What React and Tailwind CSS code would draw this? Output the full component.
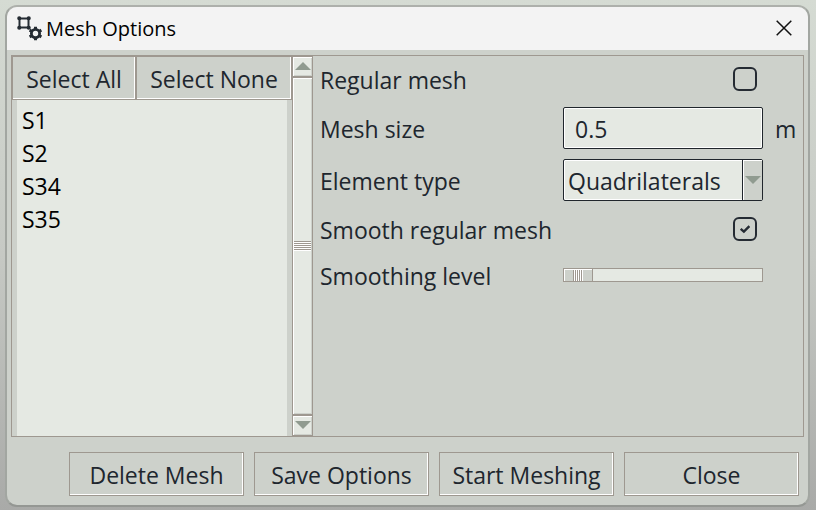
import React, { useState } from 'react';

const shapes = ['S1', 'S2', 'S34', 'S35'];

const MeshIcon = () => (
  <svg viewBox="0 0 26 26" className="w-[26px] h-[26px] text-[#252c33]" fill="none" stroke="currentColor">
    <path d="M3.5 2.5h9v9h-9z" strokeWidth="2" />
    <path d="M3.2 2.2h.1M12.7 2.2h.1M3.2 11.7h.1M12.7 11.7h.1" strokeWidth="4" strokeLinecap="round" />
    <circle cx="19.5" cy="17.5" r="4.1" strokeWidth="2.8" />
    <path
      d="M19.5 13v-2.2M19.5 22v2.2M15.5 15.2l-1.9-1.1M23.5 19.8l1.9 1.1M15.5 19.8l-1.9 1.1M23.5 15.2l1.9-1.1"
      strokeWidth="3"
    />
  </svg>
);

const Triangle = ({ down }) => (
  <svg viewBox="0 0 16 8" className="w-4 h-2" fill="#909b90">
    {down ? <path d="M0 0h16L8 8z" /> : <path d="M0 8h16L8 0z" />}
  </svg>
);

const Button = ({ children, className = '', ...props }) => (
  <button
    type="button"
    className={`pt-[2px] border border-[#9e9890] bg-[#cdd1cb] shadow-[inset_-1px_-1px_#ffffff] hover:bg-[#d7dbd5] whitespace-nowrap ${className}`}
    {...props}
  >
    {children}
  </button>
);

const ScrollButton = ({ down, label }) => (
  <button
    type="button"
    aria-label={label}
    className="flex items-center justify-center h-[21px] pb-px shrink-0 border-y border-[#9e9890] bg-[#e5e9e3] shadow-[inset_1px_1px_#ffffff,inset_-1px_-1px_#cdd1cb]"
  >
    <Triangle down={down} />
  </button>
);

const CheckBox = ({ id, checked, onChange }) => (
  <span className="relative flex w-6 h-6">
    <input
      id={id}
      type="checkbox"
      checked={checked}
      onChange={(e) => onChange(e.target.checked)}
      className="peer appearance-none w-6 h-6 rounded-md border-2 border-[#252b33]"
    />
    <svg
      viewBox="0 0 24 24"
      className="absolute inset-0 w-6 h-6 invisible peer-checked:visible pointer-events-none"
      fill="none"
      stroke="#252b33"
      strokeWidth="2.4"
    >
      <path d="M7.7 11.8l3.2 2.8 5.5-5.4" />
    </svg>
  </span>
);

const App = () => {
  const [regular, setRegular] = useState(false);
  const [smooth, setSmooth] = useState(true);
  const [size, setSize] = useState('0.5');
  const [elementType, setElementType] = useState('Quadrilaterals');
  const [level, setLevel] = useState(0);

  return (
    <div className="min-h-screen flex pl-[5px] pr-[6px] pt-[5px] pb-[3px] bg-linear-to-b from-[#d5dbd3] via-[#c6c9c4] to-[#a9aaa8] font-['Open_Sans','Noto_Sans',sans-serif] text-[23px] leading-8 text-[#20262e]">
      <div className="flex-1 flex flex-col rounded-xl border-2 border-t-[#adb0ab] border-x-[#a2a6a1] border-b-[#949793] bg-[#cdd1cb] overflow-hidden">
        <header className="flex items-center h-[43px] shrink-0 pl-[9px] pr-3 bg-[#f3f3f3]">
          <MeshIcon />
          <h1 className="flex-1 pl-1 text-[20px] text-black">Mesh Options</h1>
          <button type="button" aria-label="Close window" className="p-1 pb-[6px]">
            <svg viewBox="0 0 16 16" className="w-4 h-4" stroke="#111111" strokeWidth="1.5">
              <path d="M.7.7l14.6 14.6M15.3.7L.7 15.3" />
            </svg>
          </button>
        </header>

        <main className="flex-1 flex mx-1 mt-[5px] border border-[#9e9890]">
          <section className="flex w-[301px] shrink-0">
            <div className="flex-1 flex flex-col">
              <div className="flex h-11 shrink-0">
                <Button className="w-[124px]">Select All</Button>
                <Button className="flex-1">Select None</Button>
              </div>
              <ul className="flex-1 ml-[5px] mr-[5px] pl-[5px] pt-1 bg-[#e5e9e3] text-black leading-[33px]">
                {shapes.map((name) => (
                  <li key={name}>{name}</li>
                ))}
              </ul>
            </div>
            <div className="flex flex-col w-[21px] border-x border-[#9e9890]">
              <ScrollButton label="Scroll up" />
              <div className="flex-1 flex flex-col items-stretch justify-center border-y border-[#9e9890] bg-[#e5e9e3] shadow-[inset_1px_1px_#ffffff,inset_-1px_-1px_#cdd1cb]">
                <div className="h-[10px] mx-px bg-[repeating-linear-gradient(to_bottom,#9e9890_0px_1px,#ffffff_1px_2px)]" />
              </div>
              <ScrollButton down label="Scroll down" />
            </div>
          </section>

          <form className="flex-1 grid grid-cols-[1fr_200px_40px] auto-rows-max items-start pl-[7px]">
            <label htmlFor="regular" className="h-[50px] pt-2">Regular mesh</label>
            <div className="flex justify-end pt-[11px] pr-[6px]">
              <CheckBox id="regular" checked={regular} onChange={setRegular} />
            </div>
            <span />

            <label htmlFor="size" className="h-[52px] pt-[7px]">Mesh size</label>
            <input
              id="size"
              type="text"
              value={size}
              onChange={(e) => setSize(e.target.value)}
              className="mt-px w-full h-[42px] pt-[2px] pl-[11px] rounded-xs border border-[#20262c] bg-[#e5e9e3] shadow-[inset_0_0_0_1px_#ffffff] outline-none"
            />
            <span className="h-[52px] pt-[7px] pl-3">m</span>

            <label htmlFor="type" className="h-[50px] pt-[7px]">Element type</label>
            <div className="relative mt-px">
              <select
                id="type"
                value={elementType}
                onChange={(e) => setElementType(e.target.value)}
                className="block appearance-none w-full h-[42px] pt-[2px] pl-1 rounded-xs border border-[#20262c] bg-[#e5e9e3] shadow-[inset_0_0_0_1px_#ffffff] outline-none"
              >
                <option>Quadrilaterals</option>
                <option>Triangles</option>
              </select>
              <span className="absolute right-px inset-y-px w-5 flex items-center justify-center border-l border-[#20262c] bg-[#cdd1cb] shadow-[inset_1px_1px_#ffffff] pointer-events-none">
                <Triangle down />
              </span>
            </div>
            <span />

            <label htmlFor="smooth" className="h-12 pt-[6px]">Smooth regular mesh</label>
            <div className="flex justify-end pt-[9px] pr-[6px]">
              <CheckBox id="smooth" checked={smooth} onChange={setSmooth} />
            </div>
            <span />

            <label htmlFor="level" className="h-12 pt-1">Smoothing level</label>
            <input
              id="level"
              type="range"
              min="0"
              max="10"
              value={level}
              onChange={(e) => setLevel(Number(e.target.value))}
              className="appearance-none w-full h-[14px] mt-3 border border-[#9e9890] bg-[#e5e9e3] [&::-webkit-slider-thumb]:appearance-none [&::-webkit-slider-thumb]:w-[29px] [&::-webkit-slider-thumb]:h-3 [&::-webkit-slider-thumb]:border-r [&::-webkit-slider-thumb]:border-[#9e9890] [&::-webkit-slider-thumb]:bg-[#cdd1cb] [&::-webkit-slider-thumb]:bg-[repeating-linear-gradient(to_right,#9e9890_0px_1px,#ffffff_1px_2px)] [&::-webkit-slider-thumb]:bg-size-[10px_100%] [&::-webkit-slider-thumb]:bg-center [&::-webkit-slider-thumb]:bg-no-repeat [&::-webkit-slider-thumb]:shadow-[inset_1px_1px_#ffffff]"
            />
            <span />
          </form>
        </main>

        <footer className="flex justify-end gap-[10px] pt-[15px] pb-[9px] pr-[9px]">
          <Button className="w-[175px] h-11">Delete Mesh</Button>
          <Button className="w-[175px] h-11">Save Options</Button>
          <Button className="w-[175px] h-11">Start Meshing</Button>
          <Button className="w-[175px] h-11">Close</Button>
        </footer>
      </div>
    </div>
  );
};

export default App;
